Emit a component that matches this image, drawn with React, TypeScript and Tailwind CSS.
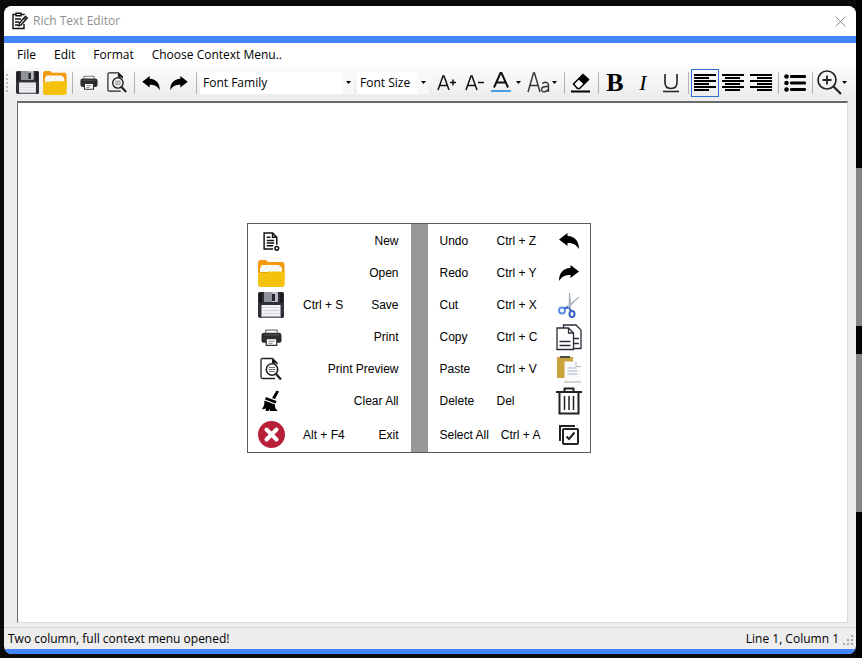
import { useState } from 'react'
import type { ReactNode } from 'react'
import clsx from 'clsx'

interface IconProps {
  className?: string
}

interface MenuEntry {
  label: string
  shortcut?: string
  icon: ReactNode
}

function NotepadIcon({ className }: IconProps) {
  return (
    <svg viewBox="0 0 16 18" className={className} fill="none" stroke="#111" strokeWidth="1.4">
      <path d="M12 3V2.5H1V16.5H12V12" />
      <path d="M4 1.2h5v2.6H4z" fill="#fff" />
      <path d="M3 7h6M3 10h4M3 13h3" />
      <path d="M13.5 4.2 15.3 6 9.2 12.8 6.8 13.6 7.4 11.2z" fill="#fff" />
      <path d="M12 6l1.8 1.6" />
    </svg>
  )
}

function FloppyIcon({ className }: IconProps) {
  return (
    <svg viewBox="0 0 26 26" className={className}>
      <path d="M1 0h24l1 1v24l-1 1H1.500L0 24.500V1z" fill="#303038" />
      <path d="M1 1h3v10H1zM22 1h3v10h-3z" fill="#1b1b20" />
      <path d="M6 0h14v10H6z" fill="#b9bcc2" />
      <path d="M6 0h8v10H6z" fill="#8f9299" />
      <path d="M14 2h3v7h-3z" fill="#26262c" />
      <path d="M3.500 13h19v12h-19z" fill="#f3f3f6" />
      <path d="M5 15.500h16M5 18.500h16M5 21.500h16" stroke="#d3d3da" />
      <path d="M3.500 24h19v1.500h-19z" fill="#a2a2b4" />
    </svg>
  )
}

function FolderIcon({ className }: IconProps) {
  return (
    <svg viewBox="0 0 27 27" className={className}>
      <path d="M0 2 1.500 0H8l2 2h15l1.500 2v9H0z" fill="#f29a0c" />
      <path d="M2 8.500 4 5h17l3 3v4H2z" fill="#fbfbf8" />
      <path d="M4 12l6-6M10 12l6-6M16 12l6-6" stroke="#ddd" strokeWidth=".6" />
      <path d="M0 14.500q0-1.500 1.500-1.500H8l2.500-1.500H27l-.5 14L25 27H1.500L0 25z" fill="#f5c20d" />
      <path d="M3 24 13 14M10 26l13-13M18 26l8-8" stroke="#eab308" strokeWidth=".7" />
    </svg>
  )
}

function PrinterIcon({ className }: IconProps) {
  return (
    <svg viewBox="0 0 20 18" className={className}>
      <path d="M4.500 4.500V2h11v2.500" fill="#fff" stroke="#777" strokeWidth="1.200" />
      <rect x=".5" y="4.500" width="19" height="9.500" rx="2.500" fill="#2b2b2b" />
      <path d="M3 6.500h14" stroke="#555" />
      <path d="M5 10h10v6.500H5z" fill="#fff" stroke="#333" strokeWidth="1.200" />
      <path d="M7 12.500h6M7 14.500h4" stroke="#888" />
    </svg>
  )
}

function PreviewIcon({ className }: IconProps) {
  return (
    <svg viewBox="0 0 22 23" className={className} fill="none" stroke="#222">
      <path d="M17 7V5.500L12.500 1H2.500Q1 1 1 2.500v17Q1 21 2.500 21H15" strokeWidth="1.300" />
      <path d="M12.500 1v4.500H17z" fill="#111" />
      <circle cx="12" cy="12" r="5.700" fill="#fff" strokeWidth="1.600" />
      <path d="M9 10h6M8.500 12h7M9 14h6" stroke="#777" />
      <path d="M16 16.500 21 22" strokeWidth="2.300" />
    </svg>
  )
}

function UndoIcon({ className }: IconProps) {
  return (
    <svg viewBox="0 0 20 16" className={className}>
      <path d="M0 6.500 8.500 0v3C16 3.500 20 8 20 16 17 11.500 14 10 8.500 10v3z" fill="#000" />
    </svg>
  )
}

function RedoIcon({ className }: IconProps) {
  return (
    <svg viewBox="0 0 20 16" className={className}>
      <path d="M20 6.500 11.500 0v3C4 3.500 0 8 0 16 3 11.500 6 10 11.500 10v3z" fill="#000" />
    </svg>
  )
}

function GrowIcon({ className }: IconProps) {
  return (
    <svg viewBox="0 0 20 16" className={className} fill="none" stroke="#111" strokeWidth="1.500">
      <path d="M1 15 6 1h1l5 14M3 10.500h7.500M13 7.500h6M16 4.500v6" />
    </svg>
  )
}

function ShrinkIcon({ className }: IconProps) {
  return (
    <svg viewBox="0 0 20 16" className={className} fill="none" stroke="#111" strokeWidth="1.500">
      <path d="M1 15 6 1h1l5 14M3 10.500h7.500M13 7.500h6" />
    </svg>
  )
}

function ColorIcon({ className }: IconProps) {
  return (
    <svg viewBox="0 0 20 21" className={className} fill="none">
      <path d="M3 15.500 9.500 1h1L17 15.500M5.500 10.500h9" stroke="#111" strokeWidth="2" />
      <path d="M0 19h20" stroke="#4a9ee0" strokeWidth="2" />
    </svg>
  )
}

function CaseIcon({ className }: IconProps) {
  return (
    <svg viewBox="0 0 23 21" className={className} fill="none" stroke="#333" strokeWidth="1.400">
      <path d="M1 20 6.500 1h1L13 20M3 13.500h8" />
      <path d="M15 11.500q5.500-3 6.500 1.500V20M21.500 14.500q-7-.5-7 3 .5 3 3.500 2.200 3-.7 3.500-3" />
    </svg>
  )
}

function EraserIcon({ className }: IconProps) {
  return (
    <svg viewBox="0 0 20 20" className={className}>
      <path d="M12 1.500 17.500 6.500 8.500 15.500H6.500L2.500 11z" fill="#fff" stroke="#000" strokeWidth="1.500" />
      <path d="M12 1 18 6.500 13 11.500 7 6z" fill="#000" />
      <path d="M0 18.500h19" stroke="#000" strokeWidth="2" />
    </svg>
  )
}

function AlignIcon({ className, short }: IconProps & { short: number }) {
  // short lines start at the given offset from the left
  return (
    <svg viewBox="0 0 22 18" className={className} fill="#000" shapeRendering="crispEdges">
      {[0, 6, 12].map((y) => (
        <g key={y}>
          <rect x="0" y={y} width="22" height="2" />
          <rect x={short} y={y + 3} width="15" height="2" />
        </g>
      ))}
    </svg>
  )
}

function ListIcon({ className }: IconProps) {
  return (
    <svg viewBox="0 0 22 18" className={className}>
      {[2.5, 9, 15.5].map((y) => (
        <g key={y}>
          <circle cx="2.500" cy={y} r="2.300" />
          <rect x="6" y={y - 1.5} width="16" height="3" rx="1" />
        </g>
      ))}
    </svg>
  )
}

function ZoomIcon({ className }: IconProps) {
  return (
    <svg viewBox="0 0 25 25" className={className} fill="none" stroke="#222">
      <circle cx="10" cy="10" r="9" strokeWidth="1.700" />
      <path d="M5.500 10h9M10 5.500v9" strokeWidth="1.800" />
      <path d="M16.500 16.500 24 24" strokeWidth="2.200" />
    </svg>
  )
}

function NewIcon({ className }: IconProps) {
  return (
    <svg viewBox="0 0 16 18" className={className} fill="none" stroke="#111" strokeWidth="1.400">
      <path d="M9.500 16H1V1h8l4 4v7M9 1v4h4M3.500 5H7M3.500 8h7M3.500 10.500h7M3.500 13h6" />
      <circle cx="13" cy="15.500" r="1.800" />
    </svg>
  )
}

function BrushIcon({ className }: IconProps) {
  return (
    <svg viewBox="0 0 20 22" className={className}>
      <path d="M15.500 .5 18 1.500 14 9 11 8z" />
      <path d="M5 7 15.500 11 14.500 13.500 4 9.500z" />
      <path d="M3.500 10.500 14 14.500q-.5 4 3 6.500H9L8.500 19 7.500 21H4.500L5 18.500 1 19.500Q4 15 3.500 10.500z" />
    </svg>
  )
}

function ExitIcon({ className }: IconProps) {
  return (
    <svg viewBox="0 0 27 27" className={className}>
      <circle cx="13.500" cy="13.500" r="13.500" fill="#b8203a" />
      <path d="M8.500 8.500l10 10M18.500 8.500l-10 10" stroke="#fff" strokeWidth="4" strokeLinecap="round" />
    </svg>
  )
}

function ScissorsIcon({ className }: IconProps) {
  return (
    <svg viewBox="0 0 22 25" className={className} fill="none">
      <path d="M11.500 0 13 13l-2 1.500z" fill="#cdd5de" stroke="#8c98a5" strokeWidth=".7" />
      <path d="M21 4 9 16l-1-1.500z" fill="#cdd5de" stroke="#8c98a5" strokeWidth=".7" />
      <circle cx="4" cy="17.500" r="3" stroke="#5b8ce0" strokeWidth="2" />
      <ellipse cx="14" cy="21" rx="2.500" ry="3" stroke="#3a63c0" strokeWidth="2" />
      <path d="M6.500 15.500 10 14M11 14.500l2 3.500" stroke="#3a63c0" strokeWidth="2" />
    </svg>
  )
}

function CopyIcon({ className }: IconProps) {
  return (
    <svg viewBox="0 0 26 27" className={className} fill="#fff" stroke="#2f2938" strokeWidth="1.300">
      <path d="M7.500 4V1H20l5 5v18.500H18" />
      <path d="M1 4h11.500l5 5v16.500H1z" />
      <path d="M12.500 4v5h5M3.500 17.500h11M3.500 21.500h11M18 14.500h5M18 19.500h5" fill="none" />
    </svg>
  )
}

function PasteIcon({ className }: IconProps) {
  return (
    <svg viewBox="0 0 26 27" className={className}>
      <path d="M1 1h16v21H1z" fill="#c9a33b" />
      <path d="M4 0h10v2H4z" fill="#4d4b43" />
      <path d="M8.500 5.500H20l5 5V26H8.500z" fill="#fafafa" />
      <path d="M20 5.500v5h5" fill="#fff" stroke="#aaa" strokeWidth=".8" />
      <path d="M8 26h17" stroke="#aaa" />
      <path d="M11.500 12h9M11.500 15h10M11.500 18h10" stroke="#a5b8c8" />
    </svg>
  )
}

function TrashIcon({ className }: IconProps) {
  return (
    <svg viewBox="0 0 26 28" className={className} fill="none" stroke="#222" strokeWidth="2">
      <path d="M0 5h26M8.500 5V1.500h9V5M3.500 5v21.500h19V5" />
      <path d="M8.500 9v14M13 9v14M17.500 9v14" strokeWidth="1.500" />
    </svg>
  )
}

function SelectAllIcon({ className }: IconProps) {
  return (
    <svg viewBox="0 0 20 20" className={className} fill="none" stroke="#222" strokeWidth="2">
      <path d="M1 16V1h15" />
      <rect x="4" y="4" width="15" height="15" rx="1" />
      <path d="M7.500 11.500 10 14l5.500-6.500" />
    </svg>
  )
}

const menus = ['File', 'Edit', 'Format', 'Choose Context Menu..']

const fileEntries: MenuEntry[] = [
  { label: 'New', icon: <NewIcon className="h-[19px] w-[17px]" /> },
  { label: 'Open', icon: <FolderIcon className="size-[27px]" /> },
  { label: 'Save', shortcut: 'Ctrl + S', icon: <FloppyIcon className="size-[26px]" /> },
  { label: 'Print', icon: <PrinterIcon className="h-[19px] w-[21px]" /> },
  { label: 'Print Preview', icon: <PreviewIcon className="h-6 w-[22px]" /> },
  { label: 'Clear All', icon: <BrushIcon className="h-[22px] w-5" /> },
  { label: 'Exit', shortcut: 'Alt + F4', icon: <ExitIcon className="size-[27px]" /> },
]

const editEntries: MenuEntry[] = [
  { label: 'Undo', shortcut: 'Ctrl + Z', icon: <UndoIcon className="h-4 w-5" /> },
  { label: 'Redo', shortcut: 'Ctrl + Y', icon: <RedoIcon className="h-4 w-5" /> },
  { label: 'Cut', shortcut: 'Ctrl + X', icon: <ScissorsIcon className="h-[25px] w-[22px]" /> },
  { label: 'Copy', shortcut: 'Ctrl + C', icon: <CopyIcon className="h-[27px] w-[26px]" /> },
  { label: 'Paste', shortcut: 'Ctrl + V', icon: <PasteIcon className="h-[27px] w-[26px]" /> },
  { label: 'Delete', shortcut: 'Del', icon: <TrashIcon className="h-7 w-[26px]" /> },
  { label: 'Select All', shortcut: 'Ctrl + A', icon: <SelectAllIcon className="size-5" /> },
]

function Separator() {
  return (
    <div className="flex h-[22px] w-[6px] shrink-0 justify-center">
      <div className="w-px bg-[#b4b4b4]" />
    </div>
  )
}

function Arrow() {
  return (
    <svg viewBox="0 0 5 3" className="h-[3px] w-[5px] shrink-0">
      <path d="M0 0h5L2.500 3z" />
    </svg>
  )
}

function ToolButton({ label, active, children }: { label: string; active?: boolean; children: ReactNode }) {
  return (
    <button
      aria-label={label}
      className={clsx(
        'flex h-7 w-7 shrink-0 items-center justify-center border',
        active ? 'border-[#2f6fd0]' : 'border-transparent'
      )}
    >
      {children}
    </button>
  )
}

function DropButton({ label, children }: { label: string; children: ReactNode }) {
  return (
    <button aria-label={label} className="flex h-7 w-9 shrink-0 items-center justify-between pr-1 pl-[2px]">
      {children}
      <Arrow />
    </button>
  )
}

function Combo({ label, options, className }: { label: string; options: string[]; className: string }) {
  return (
    <div className={clsx('relative h-[22px] shrink-0 bg-white', className)}>
      <select aria-label={label} className="h-full w-full appearance-none bg-transparent pl-[3px] outline-none">
        <option>{label}</option>
        {options.map((option) => (
          <option key={option}>{option}</option>
        ))}
      </select>
      <span className="pointer-events-none absolute inset-y-0 right-0 flex w-3 items-center justify-center bg-[#f8f8f8]">
        <Arrow />
      </span>
    </div>
  )
}

function Toolbar() {
  return (
    <div className="flex h-[31px] items-center overflow-hidden bg-linear-to-b from-[#fcfcfc] to-[#ececec]">
      <div className="mr-1 ml-[2px] flex w-[3px] shrink-0 flex-col gap-[2px]">
        {[0, 1, 2, 3, 4].map((dot) => (
          <span key={dot} className="size-[2px] bg-[#bdbdbd]" />
        ))}
      </div>
      <ToolButton label="Save"><FloppyIcon className="size-[23px] shrink-0" /></ToolButton>
      <ToolButton label="Open"><FolderIcon className="size-6 shrink-0" /></ToolButton>
      <Separator />
      <ToolButton label="Print"><PrinterIcon className="h-[17px] w-[18px]" /></ToolButton>
      <ToolButton label="Print Preview"><PreviewIcon className="h-[21px] w-5" /></ToolButton>
      <Separator />
      <ToolButton label="Undo"><UndoIcon className="h-[14px] w-[18px]" /></ToolButton>
      <ToolButton label="Redo"><RedoIcon className="h-[14px] w-[18px]" /></ToolButton>
      <Separator />
      <div className="mr-1 ml-px flex gap-[3px]">
        <Combo label="Font Family" options={['Arial', 'Times New Roman']} className="w-[154px]" />
        <Combo label="Font Size" options={['10', '12', '14']} className="w-[72px]" />
      </div>
      <ToolButton label="Grow font"><GrowIcon className="h-4 w-5 shrink-0" /></ToolButton>
      <ToolButton label="Shrink font"><ShrinkIcon className="h-4 w-5 shrink-0" /></ToolButton>
      <DropButton label="Font color"><ColorIcon className="h-[21px] w-5" /></DropButton>
      <DropButton label="Change case"><CaseIcon className="h-[21px] w-[23px]" /></DropButton>
      <Separator />
      <ToolButton label="Clear formatting"><EraserIcon className="size-5" /></ToolButton>
      <Separator />
      <ToolButton label="Bold">
        <span className="font-['Liberation_Serif',serif] text-[26px] leading-7 font-bold">B</span>
      </ToolButton>
      <ToolButton label="Italic">
        <span className="font-['Liberation_Serif',serif] text-[22px] leading-7 italic">I</span>
      </ToolButton>
      <ToolButton label="Underline">
        <svg viewBox="0 0 18 20" className="h-5 w-[18px]" fill="none" stroke="#222" strokeWidth="1.600">
          <path d="M3 1v8.500q0 6 6 6t6-6V1M1 18.500h16" />
        </svg>
      </ToolButton>
      <Separator />
      <ToolButton label="Align left" active><AlignIcon short={0} className="h-[18px] w-[22px] shrink-0" /></ToolButton>
      <ToolButton label="Align center"><AlignIcon short={3} className="h-[18px] w-[22px] shrink-0" /></ToolButton>
      <ToolButton label="Align right"><AlignIcon short={7} className="h-[18px] w-[22px] shrink-0" /></ToolButton>
      <Separator />
      <ToolButton label="Bullets"><ListIcon className="h-[18px] w-[22px] shrink-0" /></ToolButton>
      <Separator />
      <DropButton label="Zoom"><ZoomIcon className="size-[25px]" /></DropButton>
    </div>
  )
}

function ContextMenu() {
  return (
    <div
      role="menu"
      className="absolute top-[122px] left-[230px] flex w-[344px] border border-[#5c5c5c] bg-white font-['Liberation_Sans',Arial,sans-serif] text-xs"
    >
      <div className="flex flex-1 flex-col pt-px">
        {fileEntries.map((entry) => (
          <button key={entry.label} role="menuitem" className="flex h-8 items-center pr-3 pl-[9px] last:h-[35px]">
            <span className="flex w-7 shrink-0 justify-center">{entry.icon}</span>
            {entry.shortcut && <span className="ml-[18px]">{entry.shortcut}</span>}
            <span className="ml-auto">{entry.label}</span>
          </button>
        ))}
      </div>
      <div className="w-[17px] bg-[#989898]" />
      <div className="flex flex-1 flex-col pt-px">
        {editEntries.map((entry) => (
          <button key={entry.label} role="menuitem" className="flex h-8 items-center pr-[7px] pl-3 last:h-[35px]">
            <span className="mr-3 min-w-[45px] text-left">{entry.label}</span>
            <span>{entry.shortcut}</span>
            <span className="ml-auto flex w-7 shrink-0 justify-center">{entry.icon}</span>
          </button>
        ))}
      </div>
    </div>
  )
}

export default function App() {
  const [text, setText] = useState('')

  return (
    <div className="flex min-h-screen bg-[#0b0b0b] pl-1 font-['Open_Sans','Noto_Sans',sans-serif] text-xs text-black">
      <div className="mt-[6px] mb-1 flex min-w-0 flex-1 flex-col overflow-hidden rounded-lg bg-[#ededed]">
        <header className="flex h-[30px] items-center bg-white pr-[10px] pl-2">
          <NotepadIcon className="h-[18px] w-4" />
          <h1 className="ml-[5px] text-[#8f8f8f]">Rich Text Editor</h1>
          <button aria-label="Close" className="ml-auto">
            <svg viewBox="0 0 11 11" className="size-[11px]" stroke="#8a8a8a">
              <path d="M.5.5l10 10M10.500.5l-10 10" />
            </svg>
          </button>
        </header>
        <div className="h-[7px] bg-[#4285ff]" />
        <nav className="flex h-6 items-center gap-[18px] bg-white pl-[13px]">
          {menus.map((menu) => (
            <button key={menu}>{menu}</button>
          ))}
        </nav>
        <Toolbar />

        <main className="relative mx-2 mt-[3px] ml-[13px] flex flex-1">
          <textarea
            aria-label="Document"
            value={text}
            onChange={(e) => setText(e.target.value)}
            className="w-full resize-none border border-t-2 border-[#dcdcdc] border-t-[#696969] border-l-[#696969] bg-white p-1 outline-none"
          />
          <ContextMenu />
        </main>

        <footer className="mt-1 flex h-[22px] items-center border-t border-[#d4d4d4] pr-[2px] pl-1">
          <span>Two column, full context menu opened!</span>
          <span className="mr-1 ml-auto">Line 1, Column 1</span>
          <svg viewBox="0 0 11 11" className="mt-1 size-[11px]" fill="#a8a8a8">
            <path d="M8 0h2v2H8zM4 4h2v2H4zM8 4h2v2H8zM0 8h2v2H0zM4 8h2v2H4zM8 8h2v2H8z" />
          </svg>
        </footer>
        <div className="h-[5px] bg-[#4285ff]" />
      </div>

      {/* Desktop showing beside the window */}
      <div className="flex w-[6px] shrink-0 flex-col bg-black">
        <div className="flex-[168]" />
        <div className="flex-[158] bg-[#858786]" />
        <div className="flex-[28]" />
        <div className="flex-[158] bg-[#858786]" />
        <div className="flex-[146]" />
      </div>
    </div>
  )
}
